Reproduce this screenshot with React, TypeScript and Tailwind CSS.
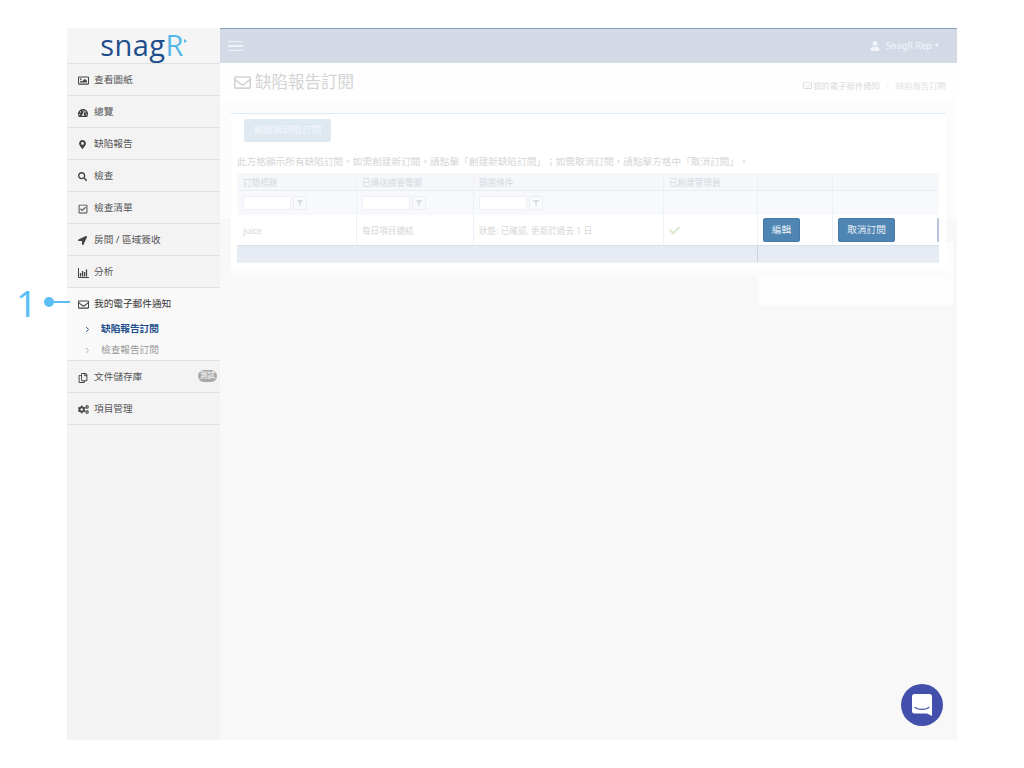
import React from "react";
import { FaRegImage, FaTachometerAlt, FaMapMarkerAlt, FaSearch, FaRegCheckSquare, FaLocationArrow, FaRegEnvelope, FaRegCopy, FaCogs, FaUser, FaCheck, FaFilter } from "react-icons/fa";
import { ChevronRight } from "lucide-react";

const FONT = "font-['Noto_Sans','Noto_Sans_CJK_TC',sans-serif]";

function BarIcon() {
  return (
    <svg width="11" height="10" viewBox="0 0 11 10" fill="none">
      <path d="M0.5 0v9.5H11" stroke="#444" strokeWidth="1" />
      <path d="M2.5 5v3.5M4.5 3v5.5M6.5 4v4.5M8.5 1.5v7" stroke="#444" strokeWidth="1.3" />
    </svg>
  );
}

function NavItem({ icon, label, dark, badge }: { icon: React.ReactNode; label: string; dark?: boolean; badge?: boolean }) {
  return (
    <div className={`relative flex h-[32px] items-center pl-[11px] ${dark ? "text-[#333]" : "border-b border-[#e1e1e1] pt-[2px] text-[#555]"}`}>
      <span className="flex w-[16px] items-center text-[#444]">{icon}</span>
      <span className="text-[9.66px]">{label}</span>
      {badge && (
        <span className="absolute right-[3px] top-[9px] flex h-[12px] w-[19px] items-center justify-center rounded-full bg-[#a8a8a8] text-[7.5px] text-white">測試</span>
      )}
    </div>
  );
}

function Cell({ children, className = "pl-[5px]" }: { children?: React.ReactNode; className?: string }) {
  return <div className={`flex items-center border-r border-[#edf0f6] ${className}`}>{children}</div>;
}

function FilterBox() {
  return (
    <div className="flex items-center gap-[2px]">
      <span className="h-[14px] w-[48px] rounded-[1px] border border-[#eef0f5] bg-white" />
      <span className="flex h-[14px] w-[14px] items-center justify-center rounded-[1px] border border-[#eceef3] bg-[#f9fafc] text-[#d8dbe0]">
        <FaFilter size={6} />
      </span>
    </div>
  );
}

export default function App() {
  const gridCols = "grid grid-cols-[120px_117px_190px_94px_75px_106px]";
  return (
    <div className={`${FONT} relative h-[768px] w-[1024px] overflow-hidden bg-white pl-[67px] pt-[28px]`}>
      <div className="absolute left-[16px] top-[280px] text-[37px] font-normal leading-[46px] text-[#5bbff5]">1</div>
      <div className="absolute left-[44px] top-[297px] h-[10px] w-[10px] rounded-full bg-[#5bbff5]" />
      <div className="absolute left-[50px] top-[301px] h-[2px] w-[20px] bg-[#5bbff5]" />

      <div className="flex h-[712px] w-[890px]">
        <aside className="w-[153px] shrink-0 bg-[#f3f3f3]">
          <div className="flex h-[36px] items-center justify-center border-b border-[#e1e1e1] bg-[#f5f5f5] pb-[3px] text-[29px] leading-none text-[#1f4e8c]">
            <span className="font-['Open_Sans',sans-serif] tracking-[0.4px]">snag<span className="text-[#57b7e6]">R</span></span>
            <span className="ml-[0px] mt-[-6px] h-0 w-0 border-y-[2px] border-l-[3px] border-y-transparent border-l-[#57b7e6]" />
          </div>
          <NavItem icon={<FaRegImage size={11} />} label="查看圖紙" />
          <NavItem icon={<FaTachometerAlt size={10} />} label="總覽" />
          <NavItem icon={<FaMapMarkerAlt size={9} />} label="缺陷報告" />
          <NavItem icon={<FaSearch size={9} />} label="檢查" />
          <NavItem icon={<FaRegCheckSquare size={10} />} label="檢查清單" />
          <NavItem icon={<FaLocationArrow size={9} />} label="房間 / 區域簽收" />
          <NavItem icon={<BarIcon />} label="分析" />
          <div className="h-[73px] border-b border-[#e1e1e1] bg-[#f9f9f9]">
            <NavItem dark icon={<FaRegEnvelope size={11} />} label="我的電子郵件通知" />
            <div className="flex h-[19px] items-center pl-[16px] text-[9.66px] font-bold text-[#1f4e8c]">
              <ChevronRight size={9} strokeWidth={2.5} />
              <span className="ml-[9px]">缺陷報告訂閱</span>
            </div>
            <div className="flex h-[21px] items-center pl-[16px] pt-[2px] text-[9.66px] text-[#999]">
              <ChevronRight size={9} strokeWidth={2} />
              <span className="ml-[9px]">檢查報告訂閱</span>
            </div>
          </div>
          <NavItem icon={<FaRegCopy size={10} />} label="文件儲存庫" badge />
          <NavItem icon={<FaCogs size={11} />} label="項目管理" />
        </aside>

        <main className="flex min-w-0 flex-1 flex-col bg-[#f9f9f9]">
          <header className="flex h-[35px] shrink-0 items-center justify-between border-t border-[#8ba0bd] bg-[#d3dae6] pl-[8px] pr-[18px]">
            <div className="flex w-[15px] flex-col gap-[3px]">
              <span className="h-[1.5px] bg-[#eef1f6]" />
              <span className="h-[1.5px] bg-[#eef1f6]" />
              <span className="h-[1.5px] bg-[#eef1f6]" />
            </div>
            <div className="flex items-center text-[9.2px] text-[#f3f5f9]">
              <FaUser size={10} />
              <span className="ml-[6px]">SnagR Rep</span>
              <span className="ml-[3px] h-0 w-0 border-x-[2.5px] border-t-[3px] border-x-transparent border-t-[#f3f5f9]" />
            </div>
          </header>

          <div className="flex h-[37px] shrink-0 items-center justify-between bg-[#fefefe] pl-[14px] pr-[11px]">
            <div className="flex items-center pt-[2px] text-[16.5px] text-[#d4d4d4]">
              <FaRegEnvelope size={17} />
              <span className="ml-[4px]">缺陷報告訂閱</span>
            </div>
            <div className="flex items-center pt-[9px] text-[8.4px] text-[#dcdcdc]">
              <FaRegEnvelope size={9} />
              <span className="ml-[1px]">我的電子郵件通知</span>
              <span className="mx-[5.5px] text-[#f2f2f2]">&gt;</span>
              <span className="text-[#e2e2e2]">缺陷報告訂閱</span>
            </div>
          </div>

          <div className="relative flex-1 bg-[linear-gradient(#fcfcfc_118px,#f8f8f8_118px)] pl-[11px] pt-[12px]">
            <div className="absolute left-[538px] top-[142px] h-[63px] w-[195px] bg-[#fdfdfd]" />
            <div className="relative mt-[1px] w-[715px] border-b-[8px] border-b-[#fbfbfb] bg-white pb-[6px] pl-[6px] pt-[1px] shadow-[inset_0_1px_0_#d6eefa]">
              <div className="pl-[7px] pt-[5px]">
                <div className="flex h-[23px] w-[87px] items-center justify-center rounded-[2px] bg-[#dfe9f2] text-[9.66px] text-[#f3f6f9]">創建新缺陷訂閱</div>
              </div>
              <p className="mt-[13px] h-[18px] whitespace-nowrap text-[9.66px] leading-[14px] text-[#d6d6d6] [text-spacing-trim:space-all]">{"此方格顯示所有缺陷訂閱。如需創建新訂閱\uFF0C請點擊「創建新缺陷訂閱」\uFF1B如需取消訂閱\uFF0C請點擊方格中「取消訂閱」。"}</p>
              <div className="w-[702px] text-[8.6px]">
                <div className={`${gridCols} h-[18px] border-b border-[#e9ecf3] bg-[#f5f7fb] pt-[3px] text-[#d5d9e0]`}>
                  <Cell className="pl-[6px]">訂閱標題</Cell>
                  <Cell>已傳送摘要電郵</Cell>
                  <Cell>篩選條件</Cell>
                  <Cell>已創建管理員</Cell>
                  <Cell />
                  <Cell className="border-r-0" />
                </div>
                <div className={`${gridCols} h-[24px] bg-[#f8f9fd]`}>
                  <Cell className="pl-[6px]"><FilterBox /></Cell>
                  <Cell><FilterBox /></Cell>
                  <Cell><FilterBox /></Cell>
                  <Cell />
                  <Cell />
                  <Cell className="border-r-0" />
                </div>
                <div className={`${gridCols} h-[30px] bg-white text-[#d6d6d6]`}>
                  <Cell className="pl-[6px] pt-[2px]">juice</Cell>
                  <Cell className="pl-[5px] pt-[2px]">每日項目總結</Cell>
                  <Cell className="pl-[5px] pt-[2px]">狀態: 已確認, 更新於過去 1 日</Cell>
                  <Cell className="pl-[5px] text-[#dcebd3]"><FaCheck size={11} /></Cell>
                  <Cell>
                    <div className="flex h-[24px] w-[37px] items-center justify-center rounded-[2px] border border-[#467aa8] bg-[#4f85b3] text-[9.66px] text-[#e8f0f6]">編輯</div>
                  </Cell>
                  <div className="flex items-center justify-between pl-[5px]">
                    <div className="flex h-[24px] w-[57px] items-center justify-center rounded-[2px] border border-[#467aa8] bg-[#4f85b3] text-[9.66px] text-[#e8f0f6]">取消訂閱</div>
                    <span className="h-[24px] w-[2px] bg-[#b9c7dc]" />
                  </div>
                </div>
                <div className={`${gridCols} h-[18px] border-y border-y-[#d8dfec] border-b-[#eef1f6] bg-[#e7ebf4]`}>
                  <span /><span /><span /><span className="border-r border-[#c9d3e4]" /><span /><span />
                </div>
              </div>
            </div>
          </div>
        </main>
      </div>

      <div className="absolute left-[901px] top-[684px] flex h-[42px] w-[42px] items-center justify-center rounded-full bg-[#4350ab]">
        <svg width="20" height="22" viewBox="0 0 20 22">
          <path d="M2.5 0h15A2.5 2.5 0 0 1 20 2.5V22l-5-2.5H2.5A2.5 2.5 0 0 1 0 17V2.5A2.5 2.5 0 0 1 2.5 0z" fill="#fff" />
          <path d="M3 13.5c4 2.6 10 2.6 14 0" fill="none" stroke="#4350ab" strokeWidth="1.2" strokeLinecap="round" />
        </svg>
      </div>
    </div>
  );
}
